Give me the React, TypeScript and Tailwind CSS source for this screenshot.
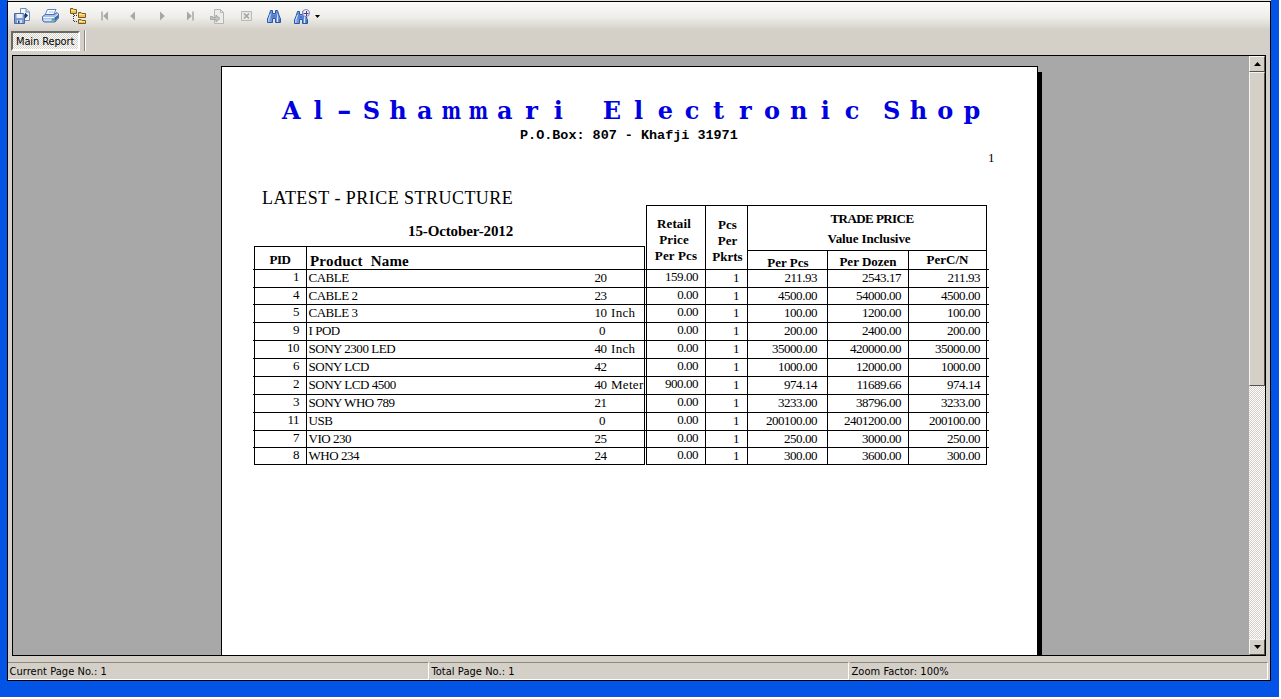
import React from "react";

type Row = {
  pid: string;
  name: string;
  size: string;
  unit?: string;
  retail: string;
  pcs: string;
  perPcs: string;
  dozen: string;
  carton: string;
  short?: boolean;
};

const rows: Row[] = [
  { pid: "1", name: "CABLE", size: "20", retail: "159.00", pcs: "1", perPcs: "211.93", dozen: "2543.17", carton: "211.93" },
  { pid: "4", name: "CABLE 2", size: "23", retail: "0.00", pcs: "1", perPcs: "4500.00", dozen: "54000.00", carton: "4500.00", short: true },
  { pid: "5", name: "CABLE 3", size: "10", unit: "Inch", retail: "0.00", pcs: "1", perPcs: "100.00", dozen: "1200.00", carton: "100.00" },
  { pid: "9", name: "I POD", size: "0", retail: "0.00", pcs: "1", perPcs: "200.00", dozen: "2400.00", carton: "200.00" },
  { pid: "10", name: "SONY 2300 LED", size: "40", unit: "Inch", retail: "0.00", pcs: "1", perPcs: "35000.00", dozen: "420000.00", carton: "35000.00" },
  { pid: "6", name: "SONY LCD", size: "42", retail: "0.00", pcs: "1", perPcs: "1000.00", dozen: "12000.00", carton: "1000.00" },
  { pid: "2", name: "SONY LCD 4500", size: "40", unit: "Meter", retail: "900.00", pcs: "1", perPcs: "974.14", dozen: "11689.66", carton: "974.14" },
  { pid: "3", name: "SONY WHO 789", size: "21", retail: "0.00", pcs: "1", perPcs: "3233.00", dozen: "38796.00", carton: "3233.00" },
  { pid: "11", name: "USB", size: "0", retail: "0.00", pcs: "1", perPcs: "200100.00", dozen: "2401200.00", carton: "200100.00" },
  { pid: "7", name: "VIO 230", size: "25", retail: "0.00", pcs: "1", perPcs: "250.00", dozen: "3000.00", carton: "250.00", short: true },
  { pid: "8", name: "WHO 234", size: "24", retail: "0.00", pcs: "1", perPcs: "300.00", dozen: "3600.00", carton: "300.00", short: true },
];

function ExportIcon() {
  return (
    <svg width="16" height="16" viewBox="0 0 16 16">
      <path d="M6.5 .5H12L15.5 4V12.5H6.5Z" fill="#f4f8ff" stroke="#6f8fb8" />
      <path d="M12 .5V4H15.5" fill="#c9daf0" stroke="#6f8fb8" />
      <path d="M11 4.500L14 7.500L11 10.500Z" fill="#17365f" />
      <path d="M.5 5.500H9.500L10.500 6.500V15.500H.500Z" fill="#7c9bd4" stroke="#4a66a0" />
      <path d="M2.500 6H8.500V10H2.500Z" fill="#e8effb" />
      <path d="M3 12H8V15H3Z" fill="#d5dff2" />
      <path d="M4 12.500H5.500V15H4Z" fill="#2a457e" />
    </svg>
  );
}

function PrintIcon() {
  return (
    <svg width="17" height="14" viewBox="0 0 17 14">
      <path d="M5.500 .500H14L11.500 6H3Z" fill="#fff" stroke="#5c86bd" />
      <path d="M6.500 3H11.500" stroke="#a9c6e8" />
      <path d="M.500 7.500L3.500 5.500H12L15 3.500L16.500 5V9L13 13H2L.500 11.500Z" fill="#a3c0ee" stroke="#4a70b0" />
      <path d="M1 8.500H12.500L16 5.500" stroke="#f2f7ff" fill="none" />
      <path d="M2 11H9" stroke="#fff" />
      <path d="M12.500 12.500V8.500L16 6V9Z" fill="#3c68b2" />
      <path d="M10 9.500H12.500V11.500H10Z" fill="#43b649" />
    </svg>
  );
}

function TreeIcon() {
  return (
    <svg width="16" height="16" viewBox="0 0 16 16">
      <path d="M3.500 6V14M4 7.500H8M4 13.500H8" stroke="#333" strokeDasharray="1 1" />
      <g fill="#f0c050" stroke="#7a5a1c">
        <path d="M.500 .500H3L4 1.500H6.500V5.500H.500Z" />
        <path d="M8.500 4.500H11L12 5.500H15.500V9.500H8.500Z" />
        <path d="M8.500 11.500H11L12 12.500H15.500V15.500H8.500Z" />
      </g>
      <path d="M1 2.500H6M9 6.500H15M9 13.500H15" stroke="#ffe49b" />
    </svg>
  );
}

function NavIcon({ left, bar }: { left?: boolean; bar?: boolean }) {
  return (
    <svg width="8" height="10" viewBox="0 0 8 10" className={left ? "" : "-scale-x-100"}>
      <path d="M7 .5V9.500L2.200 5Z" fill="#a7a7a3" />
      {bar && <path d="M1 .500V9.500" stroke="#a7a7a3" strokeWidth="1.500" />}
    </svg>
  );
}

function GotoIcon() {
  return (
    <svg width="15" height="15" viewBox="0 0 15 15">
      <path d="M4.500 .500H10.500L13.500 3.500V14.500H4.500Z" fill="#ececea" stroke="#b5b5b1" />
      <path d="M10.500 .500V3.500H13.500" fill="none" stroke="#b5b5b1" />
      <path d="M.500 7.500V10.500H6V13L10 9.500L6 6V8.500H2.500V7.500Z" fill="#c4c4c0" stroke="#a6a6a2" />
    </svg>
  );
}

function CloseIcon() {
  return (
    <svg width="11" height="10" viewBox="0 0 11 10">
      <path d="M.500 .500H10.500V9.500H.500Z" fill="#e8e8e5" stroke="#b9b9b5" />
      <path d="M3 2.500L8 7.500M8 2.500L3 7.500" stroke="#a3a3a0" strokeWidth="1.500" />
    </svg>
  );
}

function Binoculars() {
  return (
    <g>
      <path
        d="M3.500 .500H5.500V3.500H8.500V.500H10.500L11.500 4L13.500 9V12.500H8.500V8.500H5.500V12.500H.500V9L2.500 4Z"
        fill="#7199dd"
        stroke="#2c55a3"
      />
      <path d="M3.500 4L1.800 9V12M10 4L10.500 8V12" stroke="#dbe8ff" fill="none" />
      <path d="M5 4V8M9.200 4V8M12.300 9V12" stroke="#3f6cbe" />
      <path d="M6 5H8V7.500H6Z" fill="#4a76c6" />
    </g>
  );
}

function FindIcon() {
  return (
    <svg width="14" height="13" viewBox="0 0 14 13">
      <Binoculars />
    </svg>
  );
}

function ZoomIcon() {
  return (
    <svg width="17" height="15" viewBox="0 0 17 15">
      <g transform="translate(0 2)">
        <Binoculars />
      </g>
      <circle cx="12" cy="4" r="3.500" fill="#f3efff" stroke="#8581b5" />
      <path d="M9.500 4.500H14.500M12.500 2V7" stroke="#40408a" />
    </svg>
  );
}

// Spreads letters over equal cells; wide glyphs are narrowed to fit theirs.
function Letters({ text }: { text: string }) {
  return (
    <>
      {text.split("").map((ch, i) => (
        <span
          key={i}
          className={`inline-block w-[26.7px] text-center ${ch === "m" ? "scale-x-[0.76]" : ch === "-" ? "scale-x-[1.5]" : ""}`}
        >
          {ch}
        </span>
      ))}
    </>
  );
}

const headCell = "border-l border-black text-center font-bold";

function TableRow({ row, last }: { row: Row; last: boolean }) {
  const cell = "border-l border-black text-right";
  return (
    <div
      className={`${row.short ? "h-[17px]" : "h-[18px]"} relative grid grid-cols-[1px_52px_338px_2px_59px_42px_80px_81px_78px_3px] text-[13px] leading-[15px] tracking-[-0.47px] whitespace-nowrap`}
    >
      <div />
      <div className={`${cell} pr-[7px]`}>
        <div className="-mt-px">{row.pid}</div>
      </div>
      <div className="flex border-l border-black pl-[1.5px]">
        <span className="w-[286px]">{row.name}</span>
        <span className={row.size.length > 1 ? "w-[16.5px]" : "w-[16.5px] pl-[4.5px]"}>{row.size}</span>
        <span className="tracking-[0.3px]">{row.unit}</span>
      </div>
      <div className="border-l border-black" />
      <div className={`${cell} pr-[7px]`}>
        <div className="-mt-px">{row.retail}</div>
      </div>
      <div className={`${cell} pr-[8px]`}>{row.pcs}</div>
      <div className={`${cell} pr-[10px]`}>{row.perPcs}</div>
      <div className={`${cell} pr-[7px]`}>{row.dozen}</div>
      <div className={`${cell} pr-[6px]`}>{row.carton}</div>
      <div className="border-l border-black" />
      {last ? (
        <div className="absolute bottom-0 left-px flex gap-px">
          <div className="h-px w-[391px] bg-black" />
          <div className="h-px w-[341px] bg-black" />
        </div>
      ) : (
        <div className="absolute bottom-0 left-0 h-px w-full bg-black" />
      )}
    </div>
  );
}

function TableHead() {
  return (
    <div className="flex h-[65px] border-b border-black pl-px text-[13px] leading-4">
      <div className="w-[392px] pr-px">
        <div className="h-[41px] pt-[17px] pl-[154px] text-[15px] leading-[18px] font-bold tracking-[-0.12px]">15-October-2012</div>
        <div className="grid h-[23px] grid-cols-[52px_339px] border-t border-r border-black">
          <div className="border-l border-black pt-[5px] pr-px text-center font-bold tracking-[-0.4px]">PID</div>
          <div className="border-l border-black pt-[5px] pl-[3px] text-[15px] leading-[18px] font-bold tracking-[0.2px] whitespace-pre">Product  Name</div>
        </div>
      </div>
      <div className={`${headCell} w-[59px] border-t pt-[10px] pr-[4px] tracking-[0.15px]`}>
        Retail
        <br />
        Price
        <br />
        <span className="ml-[4px]">Per Pcs</span>
      </div>
      <div className={`${headCell} w-[42px] border-t pt-[11px] pl-[2px]`}>
        Pcs
        <br />
        Per
        <br />
        Pkrts
      </div>
      <div className="w-[240px] border-t border-r border-l border-black">
        <div className="h-[45px] border-b border-black pt-[5px] text-center font-bold">
          <div className="h-5 pl-[10px] tracking-[-0.55px]">TRADE PRICE</div>
          <div className="pl-[4px] tracking-[-0.1px]">Value Inclusive</div>
        </div>
        <div className="grid h-[18px] grid-cols-[79px_81px_78px] text-center font-bold">
          <div className="pt-[4px] pl-px">Per Pcs</div>
          <div className="border-l border-black pt-[3px]">Per Dozen</div>
          <div className="border-l border-black pt-px">PerC/N</div>
        </div>
      </div>
    </div>
  );
}

function ReportPage() {
  return (
    <div className="flex pt-[10px] pl-[208px]">
      <div className="h-[600px] w-[817px] border border-black bg-white font-['Liberation_Serif',serif] text-black">
        <div className="h-[46px] pt-[27px] pl-[56px] font-['DejaVu_Serif',serif] text-[24px] leading-[34px] font-bold whitespace-nowrap text-[#0000e0]">
          <Letters text="Al-Shammari" />
          <span className="inline-block w-[27px]"> </span>
          <Letters text="Electronic" />
          <span className="inline-block w-[13px]"> </span>
          <Letters text="Shop" />
        </div>
        <div className="mt-[15px] pl-[298px] font-['Liberation_Mono',monospace] text-[13.45px] leading-4 font-bold whitespace-nowrap">
          P.O.Box: 807 - Khafji 31971
        </div>
        <div className="mt-[6px] pl-[766px] text-[13px] leading-4">1</div>
        <div className="mt-[21px] h-[27px] pl-[40px] text-[18px] leading-[22px] tracking-[0.46px] whitespace-nowrap">LATEST - PRICE STRUCTURE</div>
        <div className="-mt-[9px] ml-[31px] w-[736px]">
          <TableHead />
          {rows.map((r, i) => (
            <TableRow key={r.pid} row={r} last={i === rows.length - 1} />
          ))}
        </div>
      </div>
      <div className="mt-[6px] w-[4px] bg-black" />
    </div>
  );
}

const checker =
  "bg-[repeating-conic-gradient(#ffffff_0%_25%,#d4d0c8_0%_50%)] bg-[length:2px_2px]";
const button =
  "flex h-4 w-4 items-center justify-center border border-t-[#f5f4f0] border-l-[#f5f4f0] border-r-[#55524c] border-b-[#55524c] bg-[#d4d0c8]";

function Scrollbar() {
  return (
    <div className={`flex w-4 flex-col ${checker}`}>
      <div className={button}>
        <svg width="7" height="4">
          <path d="M3.500 0L7 4H0Z" />
        </svg>
      </div>
      <div className="h-[314px] border border-t-[#f5f4f0] border-r-[#55524c] border-b-[#55524c] border-l-[#f5f4f0] bg-[#d4d0c8]" />
      <div className="flex-1" />
      <div className={button}>
        <svg width="7" height="4">
          <path d="M3.500 4L7 0H0Z" />
        </svg>
      </div>
    </div>
  );
}

function Toolbar() {
  return (
    <div className="flex h-[28px] items-center bg-linear-to-b from-[#fafaf8] from-0% via-[#eeede9] via-55% to-[#d4d0c8] to-100% pl-[6px]">
      <div className="flex w-[28px]"><ExportIcon /></div>
      <div className="flex w-[28px]"><PrintIcon /></div>
      <div className="flex w-[31px]"><TreeIcon /></div>
      <div className="flex w-[27px]"><NavIcon left bar /></div>
      <div className="flex w-[31px]"><NavIcon left /></div>
      <div className="flex w-[27px]"><NavIcon /></div>
      <div className="flex w-[24px]"><NavIcon bar /></div>
      <div className="flex w-[31px]"><GotoIcon /></div>
      <div className="flex w-[26px]"><CloseIcon /></div>
      <div className="flex w-[27px]"><FindIcon /></div>
      <div className="flex w-[21px]"><ZoomIcon /></div>
      <svg width="5" height="3">
        <path d="M0 0H5L2.500 3Z" />
      </svg>
    </div>
  );
}

function StatusPanel({ text }: { text: string }) {
  return (
    <div className="h-[18px] border-t border-r border-b border-t-[#8a877f] border-r-white border-b-white pl-[1.5px] leading-[17px]">
      {text}
    </div>
  );
}

export default function App() {
  return (
    <div className="h-[699px] w-[1281px] overflow-hidden bg-white">
      <div className="flex h-[697px] w-[1279px] flex-col bg-[#0354e6] pr-[8px] pb-[16px] pl-[7px] font-['DejaVu_Sans_Condensed',sans-serif] text-[11px] text-black">
        <div className="ml-px h-px bg-[#e4e2dc]" />
        <div className="flex h-[680px] flex-col border border-black bg-[#d4d0c8]">
          <Toolbar />
          <div className="flex h-[25px] pl-[3px]">
            <div className={`mt-px h-[20px] w-[69px] border-t-2 border-r-2 border-b-2 border-l-2 border-t-[#6b6964] border-r-white border-b-white border-l-[#6b6964] pl-[3px] leading-[17px] tracking-[-0.12px] whitespace-nowrap ${checker}`}>
              Main Report
            </div>
            <div className="ml-[4px] h-[21px] w-[2px] border-l border-l-[#8a877f] bg-white" />
          </div>
          <div className="ml-[4px] flex h-[601px] w-[1254px] border border-black bg-[#a8a8a8]">
            <div className="h-[599px] flex-1 overflow-hidden">
              <ReportPage />
            </div>
            <Scrollbar />
          </div>
          <div className="mt-[6px] grid h-[18px] grid-cols-[421px_419px_418px] grid-rows-[18px] gap-x-px tracking-[0.05px]">
            <StatusPanel text="Current Page No.: 1" />
            <StatusPanel text="Total Page No.: 1" />
            <StatusPanel text="Zoom Factor: 100%" />
          </div>
        </div>
      </div>
    </div>
  );
}
